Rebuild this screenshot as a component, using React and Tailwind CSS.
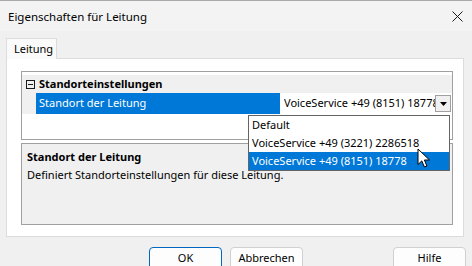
import React from 'react';

const font = { fontFamily: '"Noto Sans", "Open Sans", sans-serif' };

const Cursor = () => (
  <svg width="14" height="21" viewBox="0 0 14 21" className="absolute left-[417px] top-[148px]">
    <path
      d="M1 1 L1 16.5 L4.8 12.9 L7.4 19 L9.9 18 L7.4 12 L12.5 12 Z"
      fill="#ffffff"
      stroke="#000000"
      strokeWidth="1"
      strokeLinejoin="miter"
    />
  </svg>
);

const Button = ({ label, focused }) => (
  <div
    className={`w-[73px] h-[23px] rounded-[4px] bg-[#fdfdfd] flex items-center justify-center text-[11px] text-black ${
      focused ? 'border border-[#0067c0]' : 'border border-[#d0d0d0]'
    }`}
  >
    {label}
  </div>
);

export default function App() {
  return (
    <div className="relative w-[472px] h-[266px] overflow-hidden bg-[#f0f0f0] text-black" style={font}>
      {/* Title bar */}
      <div className="h-[31px] border-t border-[#a9a9a9] bg-[#f3f3f3] flex items-center justify-between pl-[8px] pr-[9px]">
        <span className="text-[11.5px] leading-none pt-px">Eigenschaften für Leitung</span>
        <svg width="11" height="11" viewBox="0 0 11 11">
          <path d="M0.5 0.5 L10.5 10.5 M10.5 0.5 L0.5 10.5" stroke="#1a1a1a" strokeWidth="1" />
        </svg>
      </div>

      {/* Tabs */}
      <div className="pl-[6px] pt-[7px]">
        <div className="relative z-10 -mb-px w-[51px] h-[21px] border border-b-0 border-[#dcdcdc] bg-[#fafafa] flex items-center pl-[7px] text-[11px]">
          Leitung
        </div>
        <div className="w-[458px] h-[179px] border border-[#dcdcdc] bg-white pl-[14px] pt-[12px]">
          {/* Property grid */}
          <div className="w-[432px] h-[69px] border border-[#a0a0a0] bg-white">
            <div className="h-[3px] bg-white" />
            <div className="h-[18px] bg-[#f0f0f0] flex items-center text-[11px] font-bold">
              <div className="w-[16px] flex justify-center">
                <div className="w-[9px] h-[9px] border border-[#1a1a1a] flex items-center justify-center">
                  <div className="w-[5px] h-px bg-[#1a1a1a]" />
                </div>
              </div>
              <span className="pl-[1px]">Standorteinstellungen</span>
            </div>
            <div className="h-[21px] flex text-[11px]">
              <div className="w-[14px] bg-[#f0f0f0]" />
              <div className="w-[244px] bg-[#0078d7] text-white flex items-center pl-[3px]">Standort der Leitung</div>
              <div className="flex-1 flex items-center pl-[4px] pr-[1px] overflow-hidden">
                <span className="flex-1 whitespace-nowrap overflow-hidden">VoiceService +49 (8151) 18778</span>
                <div className="w-[16px] h-[17px] border border-[#a0a0a0] bg-[#f0f0f0] flex items-center justify-center">
                  <svg width="7" height="4" viewBox="0 0 7 4">
                    <path d="M0 0 L7 0 L3.5 4 Z" fill="#000" />
                  </svg>
                </div>
              </div>
            </div>
          </div>

          {/* Description */}
          <div className="mt-[3px] w-[432px] h-[82px] border border-[#a0a0a0] bg-[#f0f0f0] pl-[5px] pt-[4px] text-[11px] leading-[17px]">
            <div className="font-bold">Standort der Leitung</div>
            <div className="mt-[1px]">Definiert Standorteinstellungen für diese Leitung.</div>
          </div>
        </div>
      </div>

      {/* Buttons */}
      <div className="flex pt-[10px] pl-[149px] gap-[8px]">
        <Button label="OK" focused />
        <Button label="Abbrechen" />
        <div className="ml-[82px]">
          <Button label="Hilfe" />
        </div>
      </div>

      {/* Dropdown list */}
      <div className="absolute left-[248px] top-[115px] w-[202px] h-[56px] border border-[#646464] bg-white text-[11px]">
        <div className="h-[18px] flex items-center pl-[3px]">Default</div>
        <div className="h-[18px] flex items-center pl-[3px]">VoiceService +49 (3221) 2286518</div>
        <div className="h-[18px] flex items-center pl-[3px] bg-[#0078d7] text-white">VoiceService +49 (8151) 18778</div>
      </div>

      <Cursor />
    </div>
  );
}
